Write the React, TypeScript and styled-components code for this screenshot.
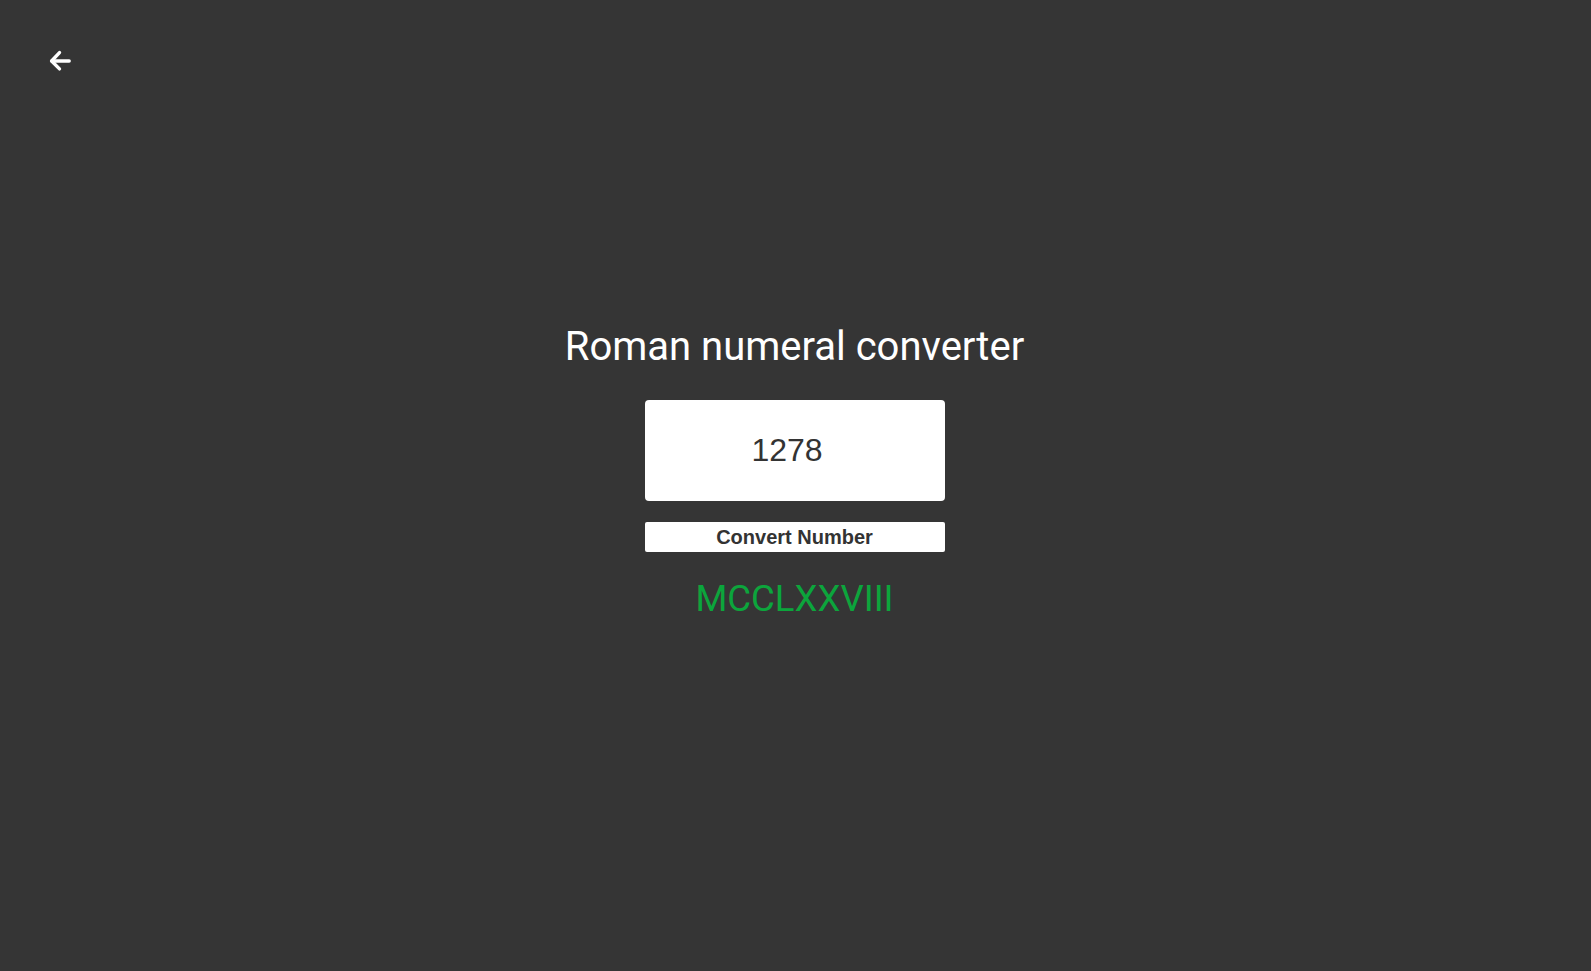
import React, { useState } from "react";
import styled, { createGlobalStyle } from "styled-components";

const Global = createGlobalStyle`
  html, body { margin: 0; padding: 0; background: #353535; }
  body { font-family: Roboto, "Liberation Sans", sans-serif; }
`;

const Page = styled.div`
  width: 100vw;
  height: 100vh;
  background: #353535;
  box-sizing: border-box;
  position: relative;
`;

const BackButton = styled.button`
  position: absolute;
  left: 49px;
  top: 50px;
  width: 22px;
  height: 22px;
  padding: 0;
  border: none;
  background: transparent;
  cursor: pointer;
  display: flex;
  align-items: center;
  justify-content: center;
`;

const Main = styled.main`
  display: flex;
  flex-direction: column;
  align-items: center;
  padding-top: 323px;
  padding-right: 2px;
`;

const Title = styled.h1`
  margin: 0;
  font-family: Roboto, sans-serif;
  font-weight: 400;
  font-size: 40px;
  color: #ffffff;
`;

const NumberInput = styled.input`
  margin-top: 30px;
  width: 300px;
  height: 101px;
  box-sizing: border-box;
  border: none;
  border-radius: 4px;
  background: #ffffff;
  font-family: "Liberation Sans", Arial, sans-serif;
  font-size: 32px;
  color: #333333;
  text-align: center;
  padding: 0 15px 0 0;
  outline: none;
`;

const ConvertButton = styled.button`
  margin-top: 21px;
  width: 300px;
  height: 30px;
  border: none;
  border-radius: 2px;
  background: #ffffff;
  font-family: "Liberation Sans", Arial, sans-serif;
  font-weight: 700;
  font-size: 20px;
  color: #333333;
  padding: 0;
  cursor: pointer;
`;

const Result = styled.div`
  margin-top: 25px;
  font-family: Roboto, sans-serif;
  font-size: 36.5px;
  color: #0ca53c;
`;

export default function App() {
  const [value, setValue] = useState("1278");
  return (
    <Page>
      <Global />
      <BackButton aria-label="Back">
        <svg width="22" height="22" viewBox="0 0 22 22" fill="none" stroke="#ffffff" strokeWidth="3.4" strokeLinecap="round" strokeLinejoin="round">
          <path d="M20.2 11H3" />
          <path d="M10.5 2.6L2.6 11l7.9 7.9" />
        </svg>
      </BackButton>
      <Main>
        <Title>Roman numeral converter</Title>
        <NumberInput value={value} onChange={(e) => setValue(e.target.value)} />
        <ConvertButton>Convert Number</ConvertButton>
        <Result>MCCLXXVIII</Result>
      </Main>
    </Page>
  );
}
